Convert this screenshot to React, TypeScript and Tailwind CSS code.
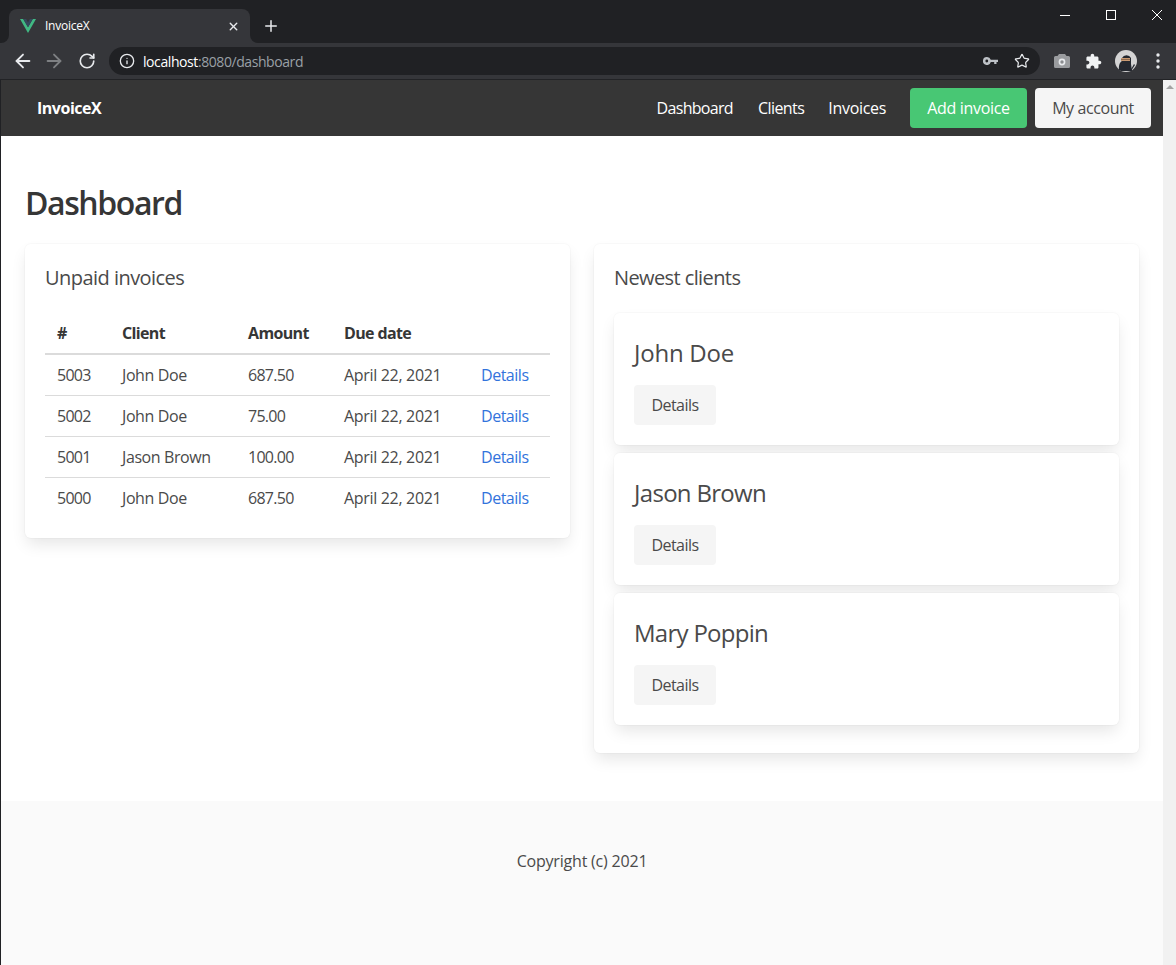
import React from "react";
import { ArrowLeft, ArrowRight, RotateCw, Info, Star, Plus, X } from "lucide-react";

const font = "font-['Open_Sans','Noto_Sans',sans-serif]";

const invoices = [
  ["5003", "John Doe", "687.50"],
  ["5002", "John Doe", "75.00"],
  ["5001", "Jason Brown", "100.00"],
  ["5000", "John Doe", "687.50"],
];
const clients = [
  ["John Doe", "tracking-[-0.01em]"],
  ["Jason Brown", "tracking-[-0.029em]"],
  ["Mary Poppin", "tracking-[-0.03em]"],
];

const cardShadow = "shadow-[0_8px_16px_-2px_rgba(10,10,10,0.1),0_0_0_1px_rgba(10,10,10,0.02)]";

function Chrome() {
  return (
    <div className="h-20 bg-[#35363a] flex flex-col border-b border-[#222326] shrink-0">
      <div className="h-[43px] bg-[#202124] flex shrink-0 items-end pl-[9px] relative">
        <div className="w-[241px] h-[34px] bg-[#35363a] rounded-t-lg flex items-center pl-[11px] pr-[10px] text-[12px] text-white relative">
          <svg width="16" height="14" viewBox="0 0 16 14">
            <path d="M0 0h3.2L8 8.2 12.8 0H16L8 14z" fill="#41b883" />
            <path d="M3.2 0h2.9L8 3.4 9.9 0h2.9L8 8.2z" fill="#35495e" />
          </svg>
          <span className="ml-[9px] flex-1 tracking-[-0.02em]">InvoiceX</span>
          <X size={13} strokeWidth={2.6} color="#e8eaed" />
          <div className="absolute right-[-8px] bottom-0 w-2 h-2 bg-[#35363a]">
            <div className="w-2 h-2 bg-[#202124] rounded-bl-lg" />
          </div>
          <div className="absolute left-[-8px] bottom-0 w-2 h-2 bg-[#35363a]">
            <div className="w-2 h-2 bg-[#202124] rounded-br-lg" />
          </div>
        </div>
        <Plus size={18} strokeWidth={2} color="#e8eaed" className="ml-[12px] mb-[8px]" />
        <div className="ml-auto self-start mr-[14px] mt-[10px] flex items-center text-white">
          <svg width="10" height="10" viewBox="0 0 10 10" className="mr-[36px]">
            <path d="M0 5.5h10" stroke="#fff" strokeWidth="1" />
          </svg>
          <svg width="10" height="10" viewBox="0 0 10 10" className="mr-[36px]">
            <rect x="0.5" y="0.5" width="9" height="9" fill="none" stroke="#fff" strokeWidth="1" />
          </svg>
          <svg width="10" height="10" viewBox="0 0 10 10">
            <path d="M0 0l10 10M10 0L0 10" stroke="#fff" strokeWidth="1" />
          </svg>
        </div>
      </div>
      <div className="flex-1 flex items-center pl-[12px]">
        <ArrowLeft size={22} strokeWidth={2} color="#e8eaed" />
        <ArrowRight size={22} strokeWidth={2} color="#7e8083" className="ml-[9px]" />
        <RotateCw size={18} strokeWidth={2.2} color="#e8eaed" className="ml-[13px]" />
        <div className="ml-[13px] w-[931px] h-7 rounded-full bg-[#202124] flex items-center pl-[10px] pr-[10px] text-[14px]">
          <Info size={16} strokeWidth={2} color="#e8eaed" />
          <span className="ml-[8px] text-white tracking-[-0.03em]">localhost</span>
          <span className="text-[#9aa0a6] tracking-[-0.03em]">:8080/dashboard</span>
          <svg width="15" height="8" viewBox="0 0 15 8" className="ml-auto">
            <path d="M4 0a4 4 0 0 1 3.800 2.700H15v2.300h-1.500v2h-2.300v-2H7.800A4 4 0 1 1 4 0z" fill="#bdc1c6" />
            <circle cx="3.800" cy="4" r="1.400" fill="#202124" />
          </svg>
          <Star size={16} strokeWidth={1.8} color="#e8eaed" className="ml-[16px]" />
        </div>
        <svg width="16" height="14" viewBox="0 0 16 14" className="ml-[14px]">
          <path d="M5 0h6l1.500 2H14.500A1.500 1.500 0 0 1 16 3.500V12.500A1.500 1.500 0 0 1 14.500 14H1.500A1.500 1.500 0 0 1 0 12.500V3.500A1.500 1.500 0 0 1 1.500 2H3.500z" fill="#9a9c9f" />
          <circle cx="8" cy="8" r="3.400" fill="#e8eaed" />
          <circle cx="8" cy="8" r="1.700" fill="#8a8c8f" />
        </svg>
        <svg width="17" height="17" viewBox="0 0 24 24" className="ml-[15px]">
          <path d="M20.500 11H19V7c0-1.100-.9-2-2-2h-4V3.500C13 2.120 11.880 1 10.500 1S8 2.120 8 3.500V5H4c-1.100 0-1.990.9-1.990 2v3.800H3.500c1.490 0 2.700 1.210 2.700 2.700s-1.210 2.700-2.700 2.700H2V20c0 1.100.9 2 2 2h3.800v-1.500c0-1.490 1.210-2.700 2.700-2.700 1.490 0 2.700 1.210 2.700 2.700V22H17c1.100 0 2-.9 2-2v-4h1.500c1.380 0 2.500-1.120 2.500-2.500S21.880 11 20.500 11z" fill="#f1f3f4" />
        </svg>
        <svg width="22" height="22" viewBox="0 0 22 22" className="ml-[13px]">
          <circle cx="11" cy="11" r="11" fill="#d4d4d4" />
          <path d="M4 20c-.5-5 1-8 3-9V8a5 5 0 0 1 9 0v6l1 7H6z" fill="#24282f" />
          <rect x="6" y="8" width="9" height="3" fill="#c99a72" />
          <rect x="6" y="9" width="9" height="1" fill="#8f6b4e" />
          <path d="M15 21l4-7 1 1-4 6z" fill="#24282f" />
        </svg>
        <svg width="4" height="16" viewBox="0 0 4 16" className="ml-[19px]">
          <circle cx="2" cy="2" r="1.700" fill="#e8eaed" />
          <circle cx="2" cy="8" r="1.700" fill="#e8eaed" />
          <circle cx="2" cy="14" r="1.700" fill="#e8eaed" />
        </svg>
      </div>
    </div>
  );
}

function Card({ title, tracking, children }: { title: string; tracking: string; children: React.ReactNode }) {
  return (
    <div className={`bg-white rounded-md p-5 ${cardShadow}`}>
      <h2 className={`text-[20px] leading-[27px] text-[#4a4a4a] h-[49px] ${tracking}`}>{title}</h2>
      {children}
    </div>
  );
}

export default function App() {
  return (
    <div className={`${font} h-[965px] w-[1176px] overflow-hidden flex flex-col bg-white text-[#4a4a4a]`}>
      <Chrome />
      <div className="flex flex-1 min-h-0 border-l border-[#202124]">
        <div className="w-[1162px] flex flex-col">
          <nav className="h-14 bg-[#363636] flex items-center text-white text-[16px] shrink-0">
            <span className="ml-9 font-bold tracking-[-0.03em]">InvoiceX</span>
            <span className="ml-auto tracking-[-0.043em] mr-px">Dashboard</span>
            <span className="ml-6 tracking-[-0.035em]">Clients</span>
            <span className="ml-6 tracking-[-0.02em]">Invoices</span>
            <button className="ml-6 w-[117px] h-10 rounded bg-[#48c774] tracking-[-0.02em]">Add invoice</button>
            <button className="ml-2 mr-3 w-[116px] h-10 rounded bg-[#f5f5f5] text-[#4a4a4a] tracking-[-0.025em]">My account</button>
          </nav>
          <main className="px-6 pt-12 pb-12">
            <h1 className="text-[32px] leading-[38px] font-semibold text-[#363636] tracking-[-0.044em] mb-[22px]">Dashboard</h1>
            <div className="grid grid-cols-2 gap-6 items-start">
              <Card title="Unpaid invoices" tracking="tracking-[-0.027em]">
                <table className="w-full text-[16px] text-[#4a4a4a]">
                  <thead>
                    <tr className="border-b-2 border-[#dbdbdb] text-[#363636] font-bold text-left tracking-[-0.04em]">
                      <th className="px-3 py-2 h-[41px] w-[65px]">#</th>
                      <th className="px-3 py-2 w-[126px]">Client</th>
                      <th className="px-3 py-2 w-[96px]">Amount</th>
                      <th className="px-3 py-2 w-[137px]">Due date</th>
                      <th className="px-3 py-2"></th>
                    </tr>
                  </thead>
                  <tbody>
                    {invoices.map((r, i) => (
                      <tr key={r[0]} className={i < 3 ? "border-b border-[#dbdbdb]" : ""}>
                        <td className="px-3 h-[41px] tracking-[-0.045em]">{r[0]}</td>
                        <td className="px-3 tracking-[-0.025em]">{r[1]}</td>
                        <td className="px-3 tracking-[-0.045em]">{r[2]}</td>
                        <td className="px-3 whitespace-nowrap tracking-[-0.02em]">April 22, 2021</td>
                        <td className="px-3 text-[#3273dc] tracking-[-0.03em]">Details</td>
                      </tr>
                    ))}
                  </tbody>
                </table>
              </Card>
              <Card title="Newest clients" tracking="tracking-[-0.03em]">
                <div className="flex flex-col gap-2">
                  {clients.map(([c, t]) => (
                    <div key={c} className={`bg-white rounded-md h-[132px] px-5 pt-[25px] ${cardShadow}`}>
                      <div className={`text-[24px] leading-[30px] mb-[17px] text-[#4a4a4a] ${t}`}>{c}</div>
                      <button className="w-[82px] h-10 rounded bg-[#f5f5f5] text-[16px] tracking-[-0.035em] text-[#4a4a4a]">Details</button>
                    </div>
                  ))}
                </div>
                <div className="h-2" />
              </Card>
            </div>
          </main>
          <footer className="flex-1 bg-[#fafafa] pt-12 text-center text-[16px] leading-6 tracking-[-0.0125em]">Copyright (c) 2021</footer>
        </div>
        <div className="w-[13px] bg-[#f1f1f1] flex justify-center pt-[5px]">
          <div className="w-0 h-0 border-x-[4px] border-x-transparent border-b-[4px] border-b-[#a3a3a3]" />
        </div>
      </div>
    </div>
  );
}
